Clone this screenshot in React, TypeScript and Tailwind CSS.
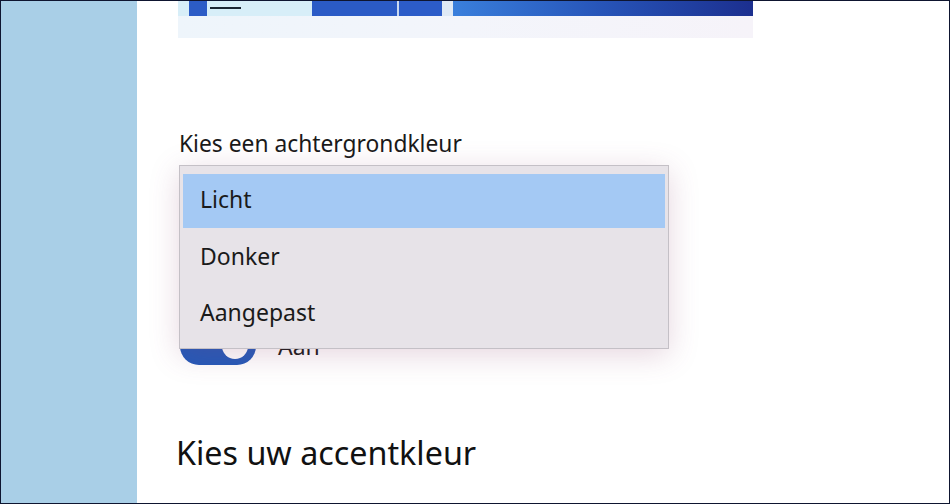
const font = { fontFamily: '"Noto Sans", "Open Sans", sans-serif' };

const options = ["Licht", "Donker", "Aangepast"];

function PreviewStrip() {
  return (
    <div className="w-[575px]">
      <div className="flex h-[15px]">
        <div className="flex w-[134px] bg-[#d7eef8] pl-[11px]">
          <div className="w-[18px] bg-[#2c5cc6]" />
          <div className="ml-[3px] mt-[6px] h-[2px] w-[31px] bg-[#1b2633]" />
        </div>
        <div className="w-[85px] bg-[#2b5bc6]" />
        <div className="w-[2px] bg-[#c9d9f0]" />
        <div className="w-[43px] bg-[#2c5cc8]" />
        <div className="w-[11px] bg-[#dfe9f5]" />
        <div className="flex-1 bg-gradient-to-r from-[#3a7fdc] via-[#2754b8] to-[#1c2f8f]" />
      </div>
      <div className="h-[22px] bg-gradient-to-r from-[#eef5fb] via-[#f3f5fb] to-[#f6f3f9]" />
    </div>
  );
}

function Dropdown() {
  return (
    <div className="absolute left-[1px] top-0 w-[490px] border border-[#c4c0c6] bg-[#e7e3e8] px-[3px] pb-[6px] pt-[8px] shadow-[0_6px_28px_rgba(140,70,110,0.22)]">
      {options.map((o, i) => (
        <div
          key={o}
          className={`flex items-center pb-[4px] pl-[17px] text-[23px] text-[#1a1a1a] ${
            i === 0 ? "mb-[2px] h-[54px] bg-[#a4c9f4]" : "h-[56px]"
          }`}
        >
          {o}
        </div>
      ))}
    </div>
  );
}

export default function App() {
  return (
    <div className="flex h-[504px] w-[950px] overflow-hidden border border-[#0e1530] bg-white" style={font}>
      <aside className="w-[136px] shrink-0 bg-[#a9cfe7]" />
      <main className="flex flex-1 flex-col pl-[41px]">
        <PreviewStrip />

        <h3 className="mt-[92px] pl-[1px] text-[22.8px] leading-[28px] text-[#1a1a1a]">Kies een achtergrondkleur</h3>

        <div className="relative mt-[7px]">
          <div className="h-[162px]" />
          <div className="ml-[2px] flex items-center gap-[22px]">
            <div className="relative h-[38px] w-[76px] rounded-full bg-[#2459b8]">
              <div className="absolute right-[8px] top-[6px] h-[26px] w-[26px] rounded-full bg-white" />
            </div>
            <span className="text-[23px] text-[#1a1a1a]">Aan</span>
          </div>
          <Dropdown />
        </div>

        <h2 className="-ml-[2px] mt-[67px] text-[32.3px] leading-[40px] text-[#111]">Kies uw accentkleur</h2>
      </main>
    </div>
  );
}
